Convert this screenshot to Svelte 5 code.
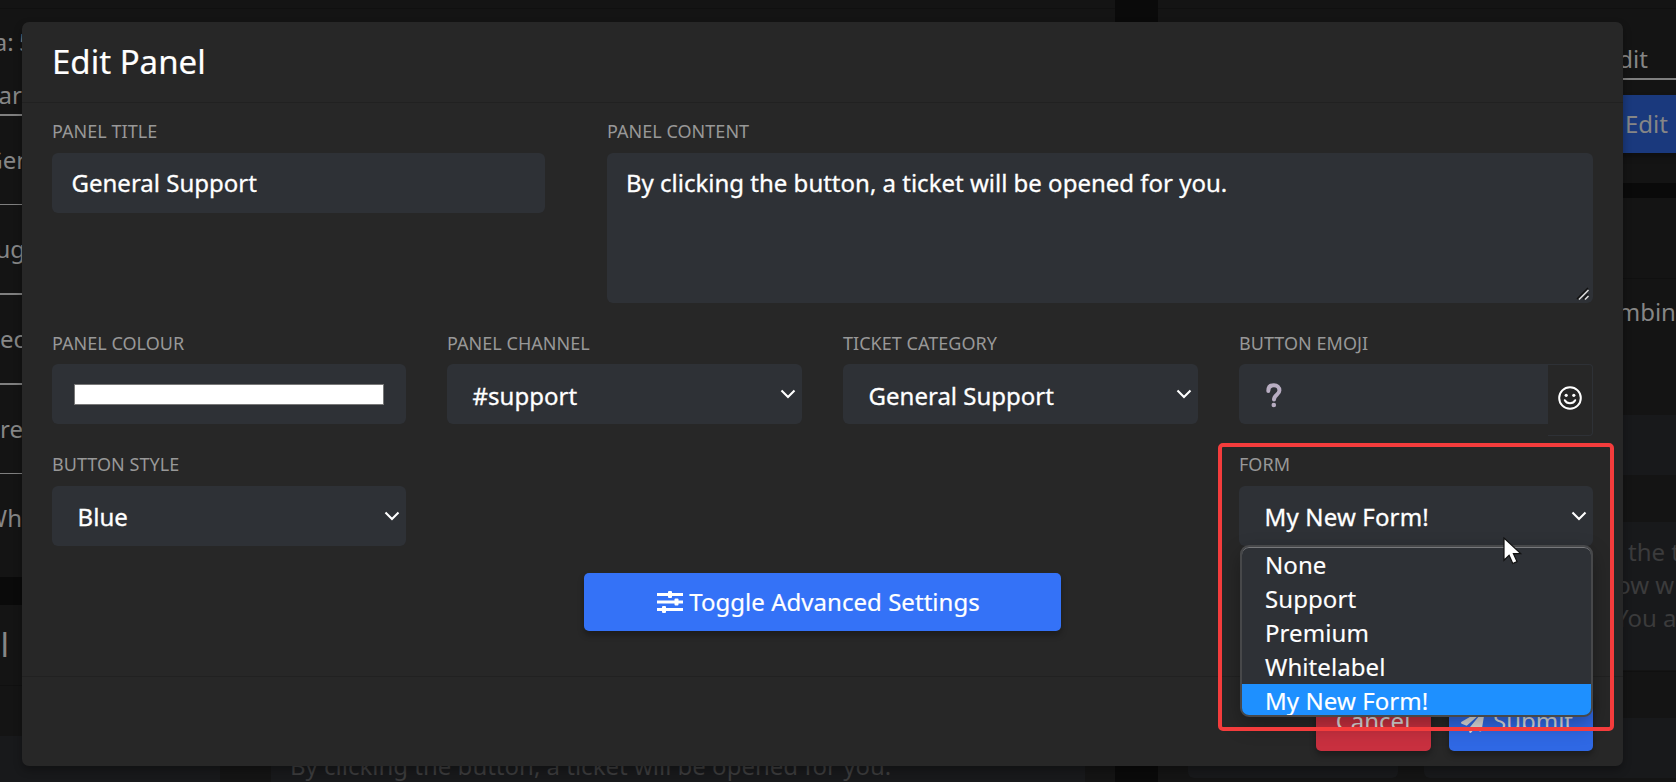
<script>
  const options = ['None', 'Support', 'Premium', 'Whitelabel', 'My New Form!'];
  const selected = 'My New Form!';
</script>

{#snippet chevron()}
  <svg class="chev" width="16" height="10" viewBox="0 0 16 10"><path d="M1.5 1.5 8 8l6.5-6.5" fill="none" stroke="#fff" stroke-width="2.1" /></svg>
{/snippet}

<div class="page">
  <div class="backdrop">
    <section class="card quota"><hr style="top:8px" />
      <span class="bt tight" style="left:-63px;top:25px">Quota: 5</span>
      <span class="bt b" style="right:1093px;top:78px">Char</span><i style="top:114px;height:2px"></i>
      <span class="bt" style="right:1084px;top:143px">Gen</span><i style="top:204px"></i>
      <span class="bt" style="right:1090px;top:232px">Bug</span><i style="top:293px;height:2px"></i>
      <span class="bt" style="right:1090px;top:322px">Rec</span><i style="top:383px;height:2px"></i>
      <span class="bt" style="right:1092px;top:412px">Pre</span><i style="top:473px"></i>
      <span class="bt" style="right:1093px;top:501px">Wh</span>
    </section>
    <section class="card create"><hr style="top:80px" />
      <span class="bt big" style="right:1106px;top:20px">Panel</span>
      <div class="fake" style="left:-20px;top:131px;width:240px;height:80px"></div>
      <div class="fake" style="left:271px;top:131px;width:814px;height:80px"><span class="bt dim" style="left:19px;top:13px">By clicking the button, a ticket will be opened for you.</span></div>
    </section>
    <section class="card multi"><hr style="top:8px" />
      <span class="bt" style="left:447px;top:42px">Edit</span><i style="top:78px;height:2px"></i>
      <div class="blue"></div><span class="bt" style="left:467px;top:107px">Edit</span>
    </section>
    <section class="card combine"><hr style="top:80px" />
      <span class="bt" style="left:430px;top:97px">Combine</span>
      <div class="fake" style="left:30px;top:217px;width:600px;height:60px"></div>
      <div class="fake" style="left:30px;top:324px;width:600px;height:148px">
        <span class="bt dim" style="left:440px;top:13px">the t</span>
        <span class="bt dim" style="left:422px;top:46px">low w</span>
        <span class="bt dim" style="left:427px;top:79px">You a</span>
      </div>
      <hr style="top:473px" />
      <div class="fake" style="left:30px;top:520px;width:210px;height:60px"></div>
      <div class="fake" style="left:266px;top:520px;width:300px;height:60px"></div>
    </section>
  </div>

  <div class="modal">
    <header><h4>Edit Panel</h4></header>
    <div class="body">
      <div class="row first">
        <div class="field">
          <span class="label">PANEL TITLE</span>
          <div class="input">General Support</div>
        </div>
        <div class="field">
          <span class="label">PANEL CONTENT</span>
          <div class="input area">By clicking the button, a ticket will be opened for you.
            <svg class="grip" width="14" height="14" viewBox="0 0 14 14" fill="none"><path d="M1 12 12 1M7 12l5-5" stroke="#111" stroke-width="1.5" /><path d="M3 12.5 12.5 3M9 12.5 12.5 9" stroke="#ddd" stroke-width="1.5" /></svg>
          </div>
        </div>
      </div>
      <div class="row four">
        <div class="field">
          <span class="label">PANEL COLOUR</span>
          <div class="input colour"><div class="swatch"></div></div>
        </div>
        <div class="field mid">
          <span class="label">PANEL CHANNEL</span>
          <div class="input select">#support{@render chevron()}</div>
        </div>
        <div class="field mid">
          <span class="label">TICKET CATEGORY</span>
          <div class="input select">General Support{@render chevron()}</div>
        </div>
        <div class="field">
          <span class="label">BUTTON EMOJI</span>
          <div class="emoji">
            <div class="input q"><svg width="16" height="25" viewBox="0 0 16 25"><path d="M2.3 8C2.3 4 4.7 2.2 7.9 2.2c3.3 0 5.5 2 5.5 5.2 0 4.4-5.4 4.3-5.4 9.2" fill="none" stroke="#b8adc2" stroke-width="4" stroke-linecap="round" /><circle cx="7.8" cy="22" r="2.3" fill="#b8adc2" /></svg></div>
            <div class="pick"><svg width="24" height="24" viewBox="0 0 24 24" fill="none" stroke="#fff" stroke-width="2"><circle cx="12" cy="12" r="10.8" /><path d="M6.8 14.2c2 4 8.4 4 10.4 0" stroke-linecap="round" /><g fill="#fff" stroke="none"><circle cx="8.2" cy="9.3" r="1.6" /><circle cx="15.8" cy="9.3" r="1.6" /></g></svg></div>
          </div>
        </div>
      </div>
      <div class="row four last">
        <div class="field">
          <span class="label">BUTTON STYLE</span>
          <div class="input select">Blue{@render chevron()}</div>
        </div>
        <div class="field formfield">
          <span class="label">FORM</span>
          <div class="input select wide">My New Form!{@render chevron()}</div>
        </div>
      </div>
      <button class="btn toggle">
        <svg width="26" height="22" viewBox="0 0 26 22" fill="#fff"><path d="M0 2h26v3H0zM0 9.5h26v3H0zM0 17h26v3H0z" /><rect x="11" y="0" width="4" height="7" rx="1" /><rect x="17.5" y="7.5" width="4" height="7" rx="1" /><rect x="5" y="15" width="4" height="7" rx="1" /></svg>
        <span>Toggle Advanced Settings</span>
      </button>
    </div>
    <footer>
      <button class="btn cancel">Cancel</button>
      <button class="btn submit"><svg width="24" height="24" viewBox="0 0 512 512"><path d="M476 3.200 12.500 270.600c-18.100 10.400-15.800 35.600 2.200 43.200L121 358.400l287.300-253.200c5.500-4.900 13.300 2.600 8.600 8.300L176 407v80.500c0 23.600 28.500 32.900 42.500 15.800L282 426l124.600 52.200c14.200 6 30.400-2.900 33-18.200l72-432C515 7.800 493.300-6.800 476 3.200z" /></svg><span>Submit</span></button>
    </footer>
  </div>

  <div class="menu">
    {#each options as o}
      <div class="opt" class:on={o === selected}>{o}</div>
    {/each}
  </div>
  <div class="highlight"></div>
  <svg class="cursor" width="20" height="30" viewBox="0 0 20 30"><path d="M1 1v22.300l5.100-5 3.700 8.200 4.200-1.900-3.600-8h7.300z" fill="#fff" stroke="#111" stroke-width="1.200" /></svg>
</div>

<style>
  :global(body) { background: #0a0a0a; overflow: hidden; }
  .page { position: relative; width: 1676px; height: 782px; overflow: hidden; background: #0a0a0a; font: 24px/34px 'Noto Sans', sans-serif; color: #fff; }
  .backdrop { position: absolute; inset: 0; }
  .card { position: absolute; background: #141414; overflow: hidden; }
  .quota { left: 0; top: 0; width: 1115px; height: 577px; }
  .create { left: 0; top: 605px; width: 1115px; height: 177px; }
  .multi { left: 1158px; top: 0; width: 518px; height: 183px; }
  .combine { left: 1158px; top: 198px; width: 518px; height: 584px; }
  .card hr { position: absolute; left: 0; right: 0; height: 1px; margin: 0; border: 0; background: #101010; }
  .card i { position: absolute; left: 0; right: 0; height: 1px; background: #7f7f7f; }
  .bt { position: absolute; color: #868686; white-space: nowrap; }
  .bt.tight { word-spacing: -1px; }
  .bt.dim { color: #3b3b3c; }
  .bt.big { font-size: 33px; line-height: 40px; }
  .fake { position: absolute; background: #18191b; border-radius: 6px; }
  .blue { position: absolute; left: 440px; top: 95px; width: 90px; height: 58px; background: #1a397d; box-shadow: 0 4px 6px rgba(0, 0, 0, .3); }
  .modal { position: absolute; left: 22px; top: 22px; width: 1601px; height: 744px; display: flex; flex-direction: column; background: #272727; border-radius: 7px; box-shadow: 0 4px 8px rgba(0, 0, 0, .3); }
  header { height: 80px; padding: 0 30px; display: flex; align-items: center; border-bottom: 1px solid #212121; }
  h4 { margin: 0 0 1px; font-size: 33px; font-weight: 400; line-height: 46px; -webkit-text-stroke: .2px #fff; }
  .body { flex: 1; padding: 16px 30px 0; display: flex; flex-direction: column; }
  .row { display: grid; }
  .first { grid-template-columns: 493px 986px; gap: 62px; height: 212px; }
  .first .label { margin-bottom: 10px; }
  .four { grid-template-columns: 395px 396px 396px 354px; height: 121px; }
  .four .field { width: 354px; }
  .four .mid { width: 355px; }
  .last { height: 121px; }
  .last .label { margin-bottom: 10px; }
  .formfield { grid-column: 4; }
  .field { display: flex; flex-direction: column; }
  .label { font-size: 18px; line-height: 24px; margin-bottom: 9px; color: #989898; letter-spacing: .03px; }
  .input { position: relative; height: 60px; box-sizing: border-box; padding: 13px 19.5px; background: #2e3136; border-radius: 6px; white-space: nowrap; -webkit-text-stroke: .3px #fff; }
  .area { height: 150px; padding-left: 19px; }
  .grip { position: absolute; right: 3px; bottom: 2px; }
  .select { padding: 15px 25.6px; }
  .last .select { padding-top: 14px; }
  .wide { letter-spacing: .15px; }
  .chev { position: absolute; right: 6px; top: 25px; }
  .colour { padding: 20px 22px; }
  .swatch { height: 21px; box-sizing: border-box; background: #fff; border: 1px solid #777; }
  .emoji { display: flex; align-items: flex-start; }
  .q { flex: 1; border-radius: 6px 0 0 6px; padding: 19px 27px; line-height: 0; }
  .pick { width: 45px; height: 72px; box-sizing: border-box; border: 1px solid #2e3136; border-left: 0; border-radius: 0 4px 4px 0; padding: 21px 0 0 10px; line-height: 0; }
  .btn { border: 0; border-radius: 5px; height: 58px; color: #fff; font: inherit; box-shadow: 0 4px 6px rgba(0, 0, 0, .3); display: flex; align-items: center; justify-content: center; padding: 0; }
  .toggle { width: 477px; align-self: center; background: #3472f7; gap: 6px; padding-right: 8px; letter-spacing: .04px; -webkit-text-stroke: .2px #fff; }
  footer { height: 90px; box-sizing: border-box; border-top: 1px solid #212121; padding: 16px 30px; display: flex; justify-content: flex-end; gap: 18px; }
  .cancel { width: 115px; background: #c8303f; color: #ddd; padding: 0 1px 2px 0; }
  .submit { width: 144px; background: #2f68e4; color: #ddd; gap: 8px; padding: 0 8px 2px 0; }
  .submit svg { fill: #ddd; }
  .menu { position: absolute; left: 1240px; top: 545px; width: 353px; height: 172px; box-sizing: border-box; border: 2px solid #47484a; border-radius: 9px; padding-top: 1px; background: #2e3136; overflow: hidden; box-shadow: 0 8px 20px rgba(0, 0, 0, .3), inset 0 1px #77787b; }
  .opt { height: 34px; line-height: 34px; padding-left: 23px; letter-spacing: .08px; -webkit-text-stroke: .15px #fff; }
  .opt.on { background: #1e90ff; }
  .highlight { position: absolute; left: 1218px; top: 443px; width: 396px; height: 288px; box-sizing: border-box; border: 4px solid #f43c3c; border-radius: 5px; }
  .cursor { position: absolute; left: 1502.5px; top: 537px; }
</style>
